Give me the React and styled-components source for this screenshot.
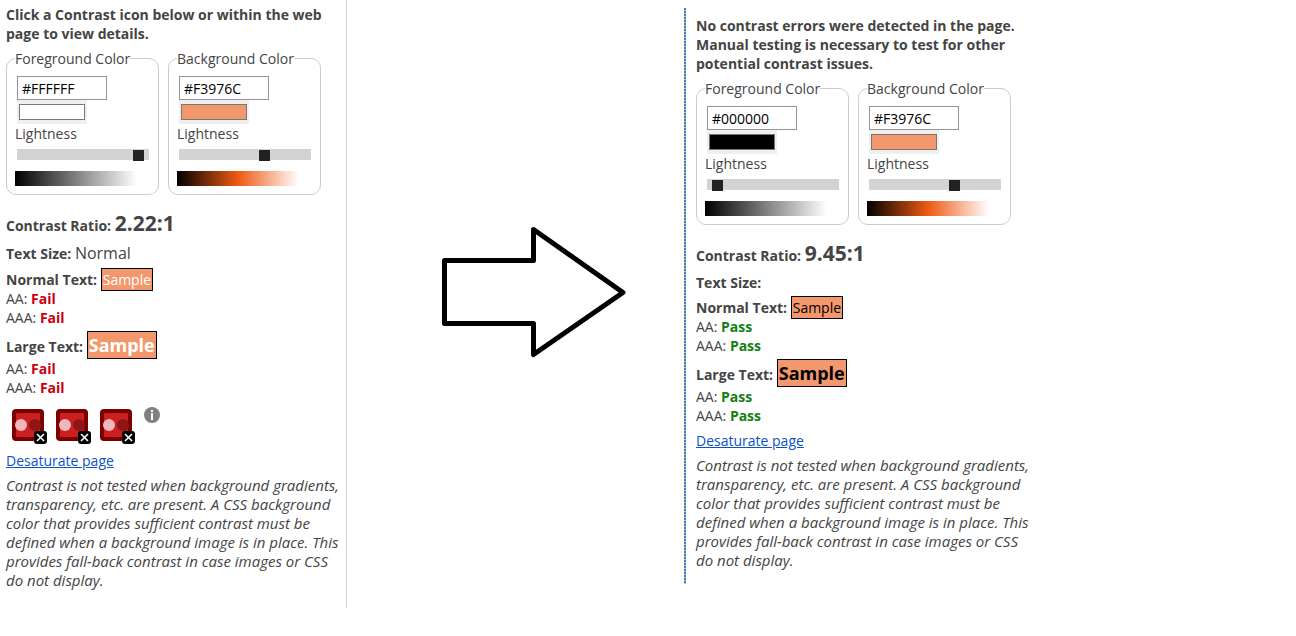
import React, { useState } from "react";
import styled, { createGlobalStyle } from "styled-components";

const GlobalStyle = createGlobalStyle`
  *, *::before, *::after { box-sizing: border-box; }
  body {
    margin: 0;
    background: #fff;
    color: #444;
    font-family: "Open Sans", sans-serif;
    font-size: 14px;
    line-height: 19px;
  }
`;

const Page = styled.main`
  display: grid;
  grid-template-columns: minmax(347px, 347fr) minmax(280px, 337fr) minmax(350px, 612fr);
  align-items: start;
`;

const BeforePanel = styled.section`
  padding: 5px 6px 18px 6px;
  border-right: 1px solid #d0d0d8;
`;

const AfterPanel = styled.section`
  position: relative;
  margin-top: 8px;
  padding: 8px 8px 14px 12px;

  &::before {
    content: "";
    position: absolute;
    inset: 0 auto 0 0;
    width: 2px;
    background: repeating-linear-gradient(#4a78b0 0 2px, #a9c4e0 2px 3px);
  }
`;

const PanelBody = styled.div`
  display: flex;
  flex-direction: column;
  gap: 6px;
  max-width: 334px;
`;

const Middle = styled.div`
  padding: 226px 0 0 94px;
`;

const Text = styled.p`
  margin: 0;
`;

const Intro = styled(Text)`
  font-weight: 700;
`;

const Note = styled(Text)`
  font-size: 15px;
  font-style: italic;
`;

const Label = styled.span`
  font-weight: 700;
`;

const Pickers = styled.div`
  display: flex;
  gap: 9px;
  margin-bottom: 11px;
`;

const Picker = styled.fieldset`
  display: flex;
  flex-direction: column;
  align-items: flex-start;
  width: 153px;
  min-width: 0;
  margin: 0;
  padding: 8px 8px;
  border: 1px solid #ccc;
  border-radius: 10px;
`;

const Legend = styled.legend`
  padding: 0;
`;

const HexInput = styled.input`
  width: 90px;
  height: 24px;
  margin: 0 2px;
  padding: 1px 4px;
  border: 1px solid #949494;
  background: #fff;
  color: #000;
  font: inherit;
`;

const ColorInput = styled.input`
  appearance: none;
  width: 70px;
  height: 24px;
  margin: 0 2px;
  padding: 0;
  border: 0;
  background: #efefef;

  &::-webkit-color-swatch-wrapper { padding: 4px 2px; }
  &::-webkit-color-swatch { border: 1px solid #777; border-radius: 0; }
`;

const Slider = styled.input`
  appearance: none;
  display: block;
  width: 132px;
  height: 11px;
  margin: 6px 2px 11px;
  padding: 0 5px;
  background: #d3d3d3;

  &::-webkit-slider-thumb {
    appearance: none;
    width: 11px;
    height: 11px;
    margin-top: 1px;
    background: #222;
  }
`;

const Gradient = styled.div`
  width: 122px;
  height: 15px;
  background: linear-gradient(to right, #000, ${(p) => p.$mid}, #fff);
`;

const Ratio = styled(Text)`
  font-weight: 700;
  line-height: 22px;
`;

const RatioValue = styled.span`
  font-size: 21px;
`;

const SizeRow = styled(Text)`
  line-height: ${(p) => (p.$filled ? 21 : 19)}px;
`;

const SizeValue = styled.span`
  font-size: 16px;
`;

const SampleRow = styled(Text)`
  line-height: ${(p) => (p.$large ? 24 : 19)}px;
`;

const Sample = styled.span`
  padding: 1px;
  border: 1px solid #000;
  background: #f3976c;
  color: ${(p) => p.$color};
  font-size: ${(p) => (p.$large ? 18 : 14)}px;
  font-weight: ${(p) => (p.$large ? 700 : 400)};
`;

const Verdict = styled.span`
  color: ${(p) => (p.$pass ? "#128012" : "#c8000f")};
  font-weight: 700;
`;

const IconRow = styled.div`
  display: flex;
  align-items: flex-start;
  gap: 9px;
  padding: 4px 6px 1px;
`;

const IconButton = styled.button`
  display: block;
  margin: ${(p) => (p.$info ? 0 : "2px 0 0")};
  padding: 0;
  border: 0;
  background: none;

  svg { display: block; }
`;

const Link = styled.a`
  color: #0b53c4;
`;

const ContrastIcon = () => (
  <svg width="35" height="35" viewBox="0 0 35 35" aria-hidden="true">
    <rect width="32" height="32" rx="4" fill="#7d0000" />
    <rect x="4" y="4" width="24" height="24" rx="1" fill="#cb2020" />
    <circle cx="9" cy="16" r="6" fill="#f0b8bb" />
    <circle cx="23" cy="16" r="6" fill="#8e1618" />
    <rect x="22" y="22" width="13" height="13" rx="3" fill="#000" />
    <path d="M25 25 32 32M32 25 25 32" stroke="#fff" strokeWidth="1.6" />
  </svg>
);

const InfoIcon = () => (
  <svg width="16" height="16" viewBox="0 0 16 16" aria-hidden="true">
    <circle cx="8" cy="8" r="8" fill="#808080" />
    <path d="M7 3h2v2H7zM7 6h2v7H7z" fill="#fff" />
  </svg>
);

const Arrow = () => (
  <svg width="186" height="132" viewBox="0 0 186 132" role="img" aria-label="Before to after">
    <path
      d="M3.5 34.5H92.5V3.5L182 66.5 92.5 128.5V97.5H3.5Z"
      fill="none"
      stroke="#000"
      strokeWidth="5"
      strokeLinejoin="round"
    />
  </svg>
);

function ColorPicker({ title, initial, lightness, mid }) {
  const [color, setColor] = useState(initial);
  const [level, setLevel] = useState(lightness);
  const update = (e) => setColor(e.target.value.toUpperCase());
  return (
    <Picker>
      <Legend>{title}</Legend>
      <HexInput aria-label={`${title} hex value`} value={color} onChange={update} />
      <ColorInput type="color" aria-label={title} value={color.toLowerCase()} onChange={update} />
      <label>
        Lightness
        <Slider type="range" value={level} onChange={(e) => setLevel(Number(e.target.value))} />
      </label>
      <Gradient $mid={mid} />
    </Picker>
  );
}

function TextResult({ label, large, color, pass }) {
  const verdict = pass ? "Pass" : "Fail";
  return (
    <div>
      <SampleRow $large={large}>
        <Label>{label}</Label>{" "}
        <Sample $large={large} $color={color}>Sample</Sample>
      </SampleRow>
      <Text>AA: <Verdict $pass={pass}>{verdict}</Verdict></Text>
      <Text>AAA: <Verdict $pass={pass}>{verdict}</Verdict></Text>
    </div>
  );
}

function ContrastReport({ intro, foreground, lightness, ratio, size, pass, errors = 0 }) {
  return (
    <PanelBody>
      <Intro>{intro}</Intro>
      <Pickers>
        <ColorPicker title="Foreground Color" initial={foreground} lightness={lightness} mid="#808080" />
        <ColorPicker title="Background Color" initial="#F3976C" lightness={68} mid="#ee5a13" />
      </Pickers>
      <Ratio>Contrast Ratio: <RatioValue>{ratio}</RatioValue></Ratio>
      <SizeRow $filled={Boolean(size)}>
        <Label>Text Size:</Label> {size && <SizeValue>{size}</SizeValue>}
      </SizeRow>
      <TextResult label="Normal Text:" color={foreground} pass={pass} />
      <TextResult label="Large Text:" large color={foreground} pass={pass} />
      {errors > 0 && (
        <IconRow>
          {Array.from({ length: errors }, (_, i) => (
            <IconButton key={i} type="button" aria-label="Very low contrast">
              <ContrastIcon />
            </IconButton>
          ))}
          <IconButton $info type="button" aria-label="More information">
            <InfoIcon />
          </IconButton>
        </IconRow>
      )}
      <Text><Link href="#desaturate">Desaturate page</Link></Text>
      <Note>
        Contrast is not tested when background gradients, transparency, etc. are present. A CSS
        background color that provides sufficient contrast must be defined when a background image
        is in place. This provides fall-back contrast in case images or CSS do not display.
      </Note>
    </PanelBody>
  );
}

export default function App() {
  return (
    <>
      <GlobalStyle />
      <Page>
        <BeforePanel>
          <ContrastReport
            intro="Click a Contrast icon below or within the web page to view details."
            foreground="#FFFFFF"
            lightness={100}
            ratio="2.22:1"
            size="Normal"
            pass={false}
            errors={3}
          />
        </BeforePanel>
        <Middle>
          <Arrow />
        </Middle>
        <AfterPanel>
          <ContrastReport
            intro="No contrast errors were detected in the page. Manual testing is necessary to test for other potential contrast issues."
            foreground="#000000"
            lightness={0}
            ratio="9.45:1"
            pass
          />
        </AfterPanel>
      </Page>
    </>
  );
}
